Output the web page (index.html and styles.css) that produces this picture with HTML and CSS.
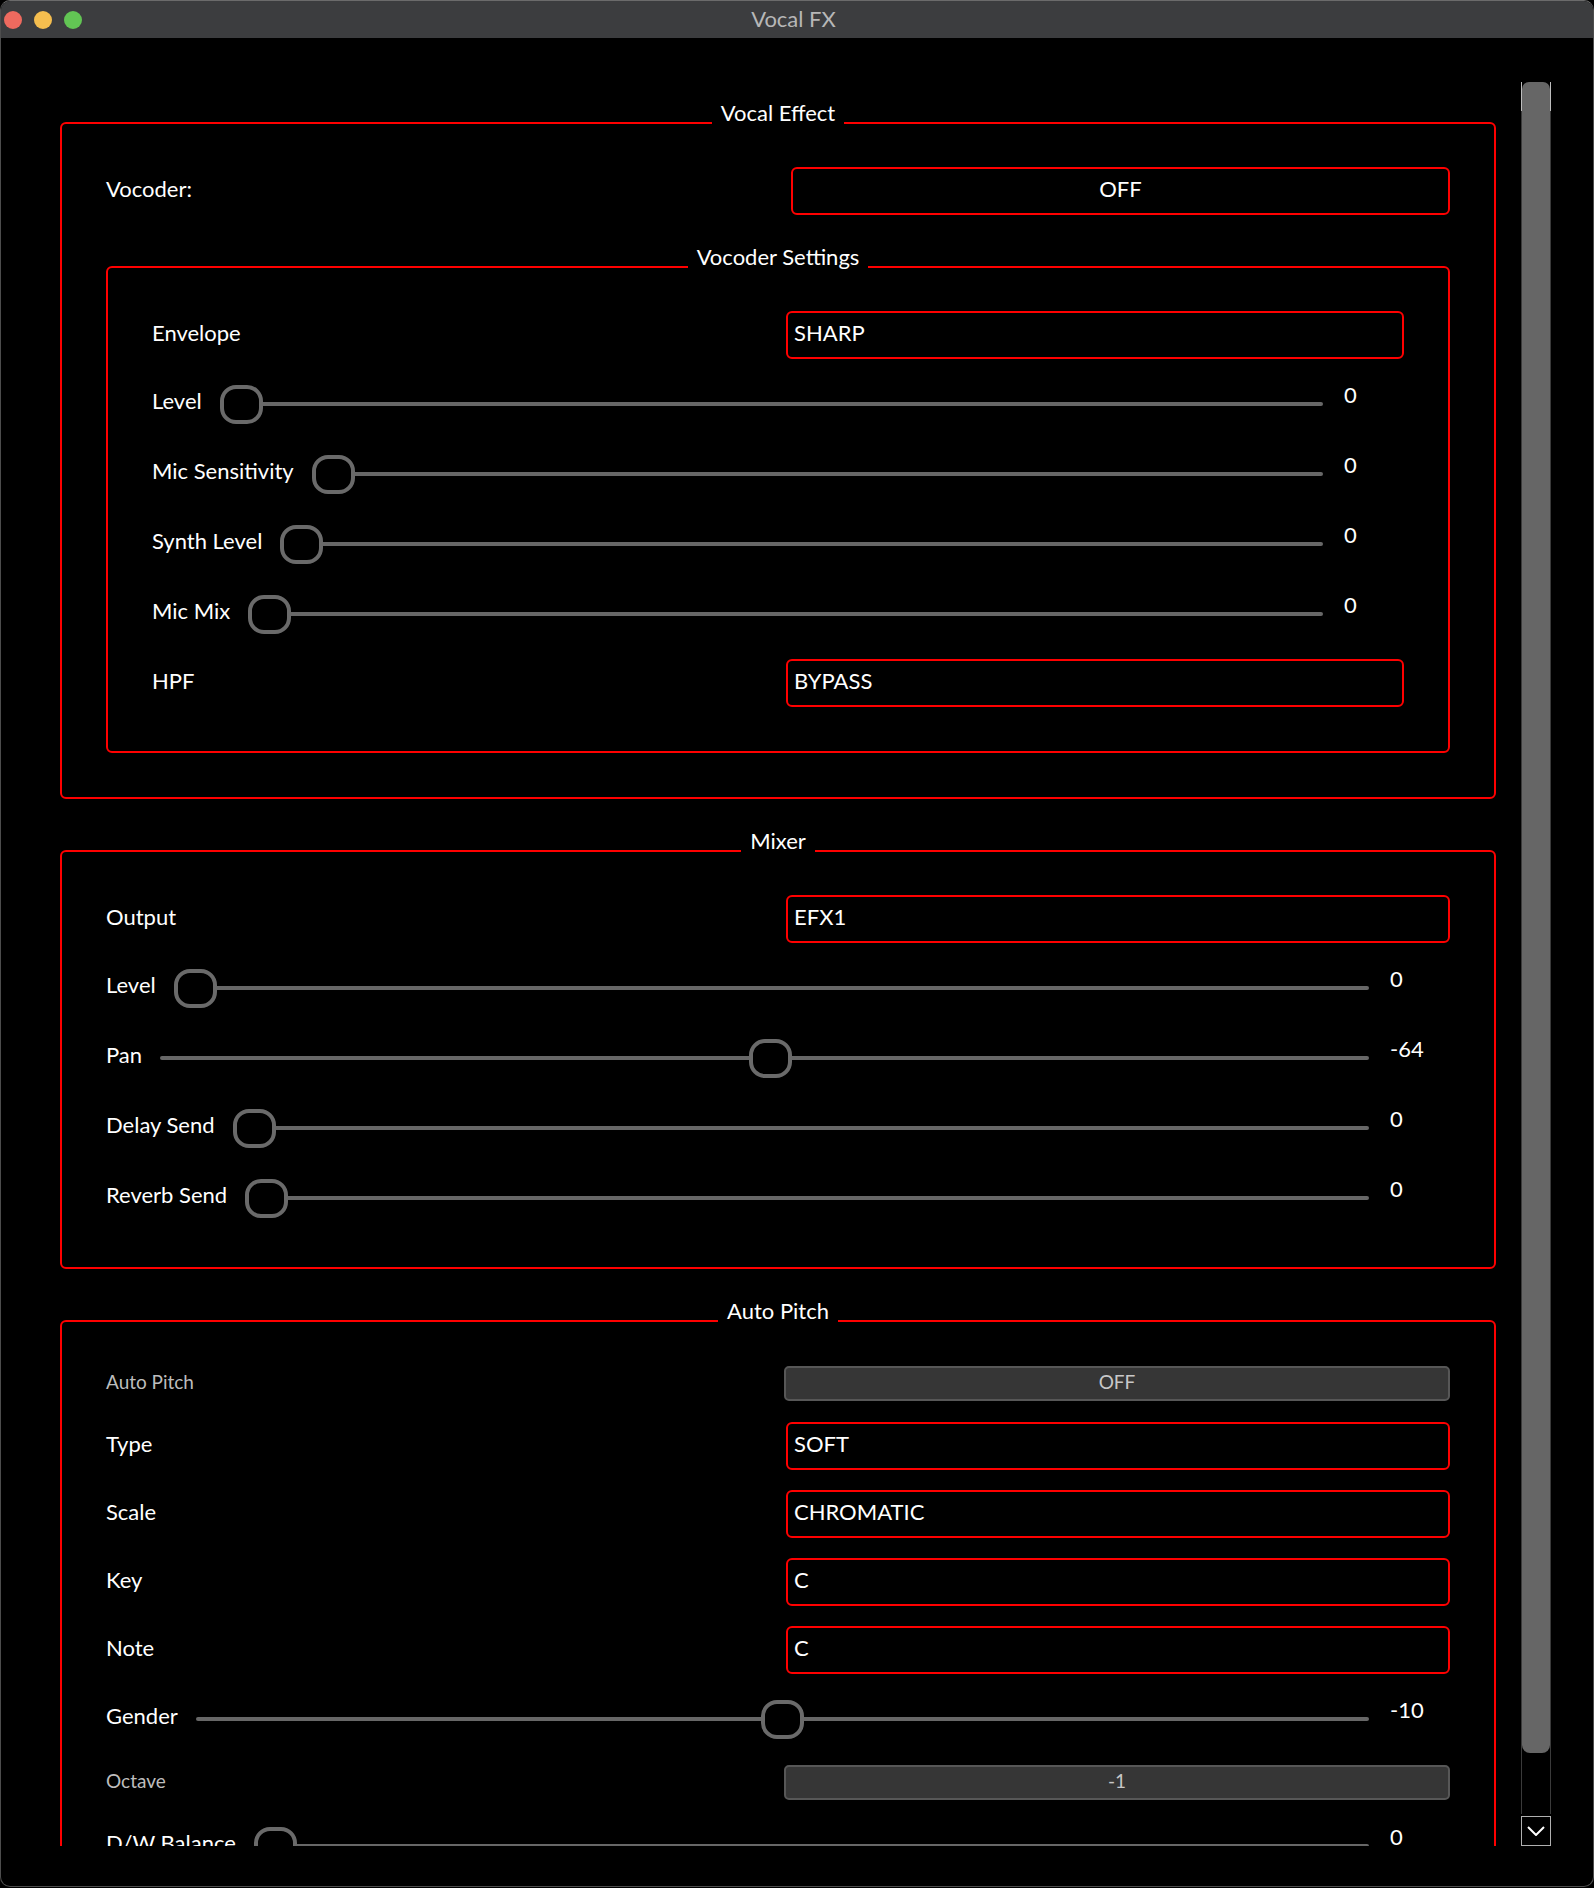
FILE: index.html
```html
<!DOCTYPE html>
<html lang="en">
<head>
<meta charset="utf-8">
<title>Vocal FX</title>
<link rel="stylesheet" href="styles.css">
</head>
<body>
<div class="window">
  <div class="titlebar">
    <div class="lights">
      <span class="light red"></span>
      <span class="light yellow"></span>
      <span class="light green"></span>
    </div>
    <div class="title">Vocal FX</div>
    <div></div>
  </div>
  <div class="content">
    <div class="scroll-view">
      <div class="scroll-inner">

        <fieldset class="group">
          <legend>Vocal Effect</legend>
          <div class="group-body">
            <div class="row">
              <span class="label grow">Vocoder:</span>
              <div class="field center w-off">OFF</div>
            </div>
            <fieldset class="group nested">
              <legend>Vocoder Settings</legend>
              <div class="group-body">
                <div class="row">
                  <span class="label grow">Envelope</span>
                  <div class="field w-vs">SHARP</div>
                </div>
                <div class="row slider-row">
                  <span class="label">Level</span>
                  <div class="slider"><div class="track"></div><div class="knob" style="--p:0"></div></div>
                  <span class="value">0</span>
                </div>
                <div class="row slider-row">
                  <span class="label">Mic Sensitivity</span>
                  <div class="slider"><div class="track"></div><div class="knob" style="--p:0"></div></div>
                  <span class="value">0</span>
                </div>
                <div class="row slider-row">
                  <span class="label">Synth Level</span>
                  <div class="slider"><div class="track"></div><div class="knob" style="--p:0"></div></div>
                  <span class="value">0</span>
                </div>
                <div class="row slider-row">
                  <span class="label">Mic Mix</span>
                  <div class="slider"><div class="track"></div><div class="knob" style="--p:0"></div></div>
                  <span class="value">0</span>
                </div>
                <div class="row">
                  <span class="label grow">HPF</span>
                  <div class="field w-vs">BYPASS</div>
                </div>
              </div>
            </fieldset>
          </div>
        </fieldset>

        <fieldset class="group">
          <legend>Mixer</legend>
          <div class="group-body">
            <div class="row">
              <span class="label grow">Output</span>
              <div class="field w-full">EFX1</div>
            </div>
            <div class="row slider-row">
              <span class="label">Level</span>
              <div class="slider"><div class="track"></div><div class="knob" style="--p:0"></div></div>
              <span class="value">0</span>
            </div>
            <div class="row slider-row">
              <span class="label">Pan</span>
              <div class="slider"><div class="track"></div><div class="knob" style="--p:0.505"></div></div>
              <span class="value">-64</span>
            </div>
            <div class="row slider-row">
              <span class="label">Delay Send</span>
              <div class="slider"><div class="track"></div><div class="knob" style="--p:0"></div></div>
              <span class="value">0</span>
            </div>
            <div class="row slider-row">
              <span class="label">Reverb Send</span>
              <div class="slider"><div class="track"></div><div class="knob" style="--p:0"></div></div>
              <span class="value">0</span>
            </div>
          </div>
        </fieldset>

        <fieldset class="group">
          <legend>Auto Pitch</legend>
          <div class="group-body">
            <div class="row gray-row">
              <span class="label small grow">Auto Pitch</span>
              <div class="gray-btn">OFF</div>
            </div>
            <div class="row">
              <span class="label grow">Type</span>
              <div class="field w-full">SOFT</div>
            </div>
            <div class="row">
              <span class="label grow">Scale</span>
              <div class="field w-full">CHROMATIC</div>
            </div>
            <div class="row">
              <span class="label grow">Key</span>
              <div class="field w-full">C</div>
            </div>
            <div class="row">
              <span class="label grow">Note</span>
              <div class="field w-full">C</div>
            </div>
            <div class="row slider-row">
              <span class="label">Gender</span>
              <div class="slider"><div class="track"></div><div class="knob" style="--p:0.5"></div></div>
              <span class="value">-10</span>
            </div>
            <div class="row gray-row">
              <span class="label small grow">Octave</span>
              <div class="gray-btn">-1</div>
            </div>
            <div class="row slider-row">
              <span class="label">D/W Balance</span>
              <div class="slider"><div class="track"></div><div class="knob" style="--p:0"></div></div>
              <span class="value">0</span>
            </div>
          </div>
        </fieldset>

      </div>
    </div>
    <div class="scrollbar">
      <div class="sb-track">
        <div class="sb-cap"><div class="sb-cap-fill"></div></div>
        <div class="sb-thumb"></div>
      </div>
      <div class="sb-down">
        <svg width="18" height="10" viewBox="0 0 18 10"><polyline points="1,1 9,9 17,1" fill="none" stroke="#fff" stroke-width="2"/></svg>
      </div>
    </div>
  </div>
</div>
</body>
</html>
```
FILE: styles.css
```css
* { box-sizing: border-box; }
html, body { margin: 0; padding: 0; background: #000; }
body { font-family: Lato, "Open Sans", sans-serif; color: #fff; }

.window {
  width: 1594px;
  height: 1887px;
  border: 1px solid #4d4d4d;
  border-top-color: #6b6b6b;
  border-radius: 10px;
  overflow: hidden;
  background: #000;
  display: flex;
  flex-direction: column;
}

.titlebar {
  height: 37px;
  flex: none;
  background: #3c3d3f;
  display: grid;
  grid-template-columns: 1fr auto 1fr;
  align-items: center;
}
.lights { display: flex; gap: 12px; padding-left: 3px; }
.light { width: 18px; height: 18px; border-radius: 50%; }
.red { background: #ee6a5f; }
.yellow { background: #f5be4f; }
.green { background: #62c554; }
.title {
  font-size: 22px;
  color: #b7b7b7;
  padding-bottom: 2px;
  margin-right: 7px;
}

.content {
  flex: 1;
  min-height: 0;
  display: flex;
  gap: 25px;
  padding: 44px 42px 40px 59px;
}
.scroll-view { flex: 1; overflow: hidden; }
.scroll-inner {
  padding-top: 19px;
  display: flex;
  flex-direction: column;
  gap: 30px;
}

.group {
  margin: 0;
  min-width: 0;
  border: 2px solid #ff0000;
  border-radius: 6px;
  padding: 22px 44px 44px;
}
.group > legend {
  margin: 0 auto;
  padding: 1px 9px 21px;
  font-size: 22px;
  line-height: 22px;
  color: #fff;
}
.nested { margin-top: 10px; }
.group-body { display: flex; flex-direction: column; gap: 20px; }

.row { display: flex; align-items: center; min-height: 48px; }
.slider-row { height: 50px; }
.gray-row { min-height: 37px; }

.label {
  font-size: 22px;
  color: #fff;
  white-space: nowrap;
  padding-bottom: 5px;
}
.slider-row .label { padding-bottom: 7px; }
.label.grow { flex: 1; }
.label.small { font-size: 19px; color: #bdbdbd; }

.field {
  flex: none;
  height: 48px;
  border: 2px solid #ff0000;
  border-radius: 6px;
  display: flex;
  align-items: center;
  padding: 0 0 5px 6px;
  font-size: 22px;
  color: #fff;
}
.field.center { justify-content: center; padding-left: 0; }
.w-off { width: 659px; }
.w-vs { width: 618px; }
.w-full { width: 664px; }

.gray-btn {
  flex: none;
  width: 666px;
  height: 35px;
  background: #363636;
  border: 2px solid #575757;
  border-radius: 5px;
  display: flex;
  align-items: center;
  justify-content: center;
  padding-bottom: 4px;
  font-size: 19px;
  color: #c8c8c8;
}

.slider {
  flex: 1;
  align-self: stretch;
  margin-left: 18px;
  position: relative;
  display: flex;
  align-items: center;
}
.track {
  width: 100%;
  height: 4px;
  border-radius: 2px;
  background: #676767;
}
.knob {
  position: absolute;
  top: 50%;
  left: calc(var(--p) * (100% - 43px));
  width: 43px;
  height: 39px;
  margin-top: -19.5px;
  border: 4px solid #6a6a6a;
  border-radius: 16px;
  background: #000;
}
.value {
  flex: none;
  width: 60px;
  margin-left: 21px;
  align-self: flex-start;
  margin-top: 5px;
  font-size: 22px;
  line-height: 22px;
  color: #fff;
}

.scrollbar {
  flex: none;
  width: 30px;
  display: flex;
  flex-direction: column;
  gap: 2px;
}
.sb-track {
  flex: 1;
  border-left: 1px solid #3a3a3a;
  border-right: 1px solid #3a3a3a;
}
.sb-cap {
  height: 29px;
  margin: 0 -1px;
  border-left: 1px solid #bdbdbd;
  border-right: 1px solid #bdbdbd;
  background: #000;
}
.sb-cap-fill {
  height: 100%;
  background: #666;
  border-radius: 7px 7px 0 0;
}
.sb-thumb {
  height: 1642px;
  background: #666;
  border-radius: 0 0 8px 8px;
}
.sb-down {
  flex: none;
  height: 30px;
  border: 1px solid #b0b0b0;
  display: flex;
  align-items: center;
  justify-content: center;
}
```
